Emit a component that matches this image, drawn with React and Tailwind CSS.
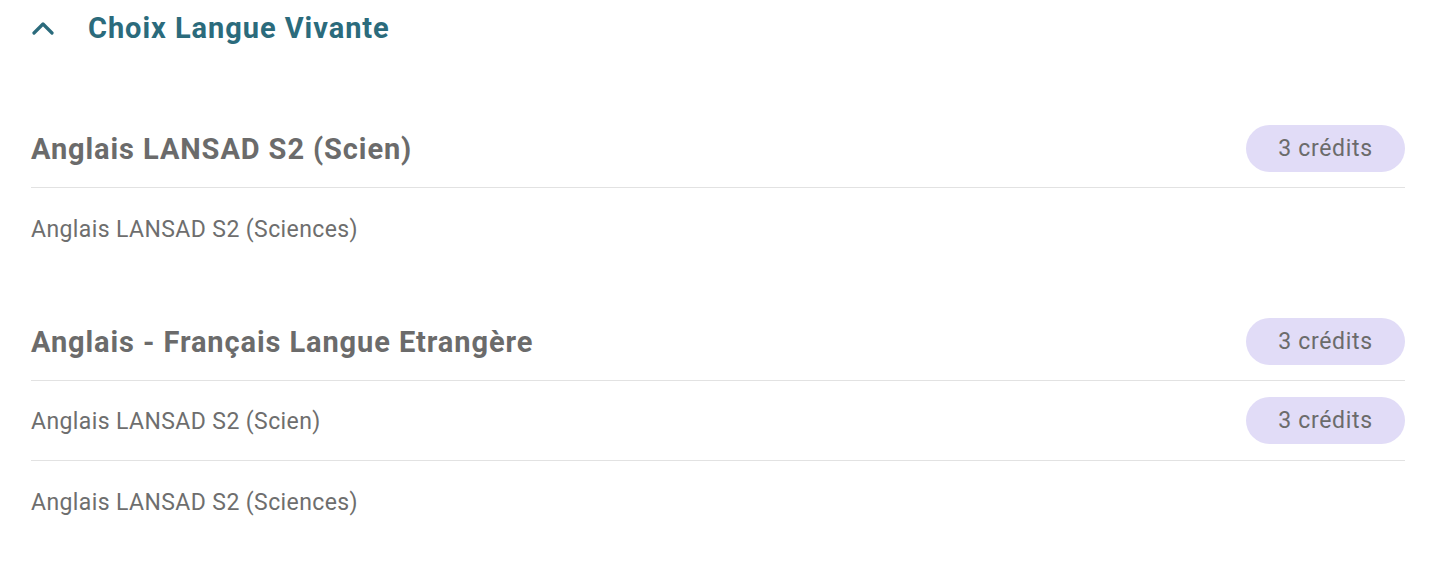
const sections = [
  {
    title: "Anglais LANSAD S2 (Scien)",
    credits: 3,
    rows: [{ label: "Anglais LANSAD S2 (Sciences)" }],
  },
  {
    title: "Anglais - Français Langue Etrangère",
    credits: 3,
    rows: [
      { label: "Anglais LANSAD S2 (Scien)", credits: 3 },
      { label: "Anglais LANSAD S2 (Sciences)" },
    ],
  },
];

function Credits({ value }) {
  return (
    <span className="inline-flex h-[47px] w-[159px] items-center justify-center rounded-full bg-[#e1dcf7] pt-[2px] text-[23px] tracking-[0.7px] text-[#6b6b6b]">
      {value} crédits
    </span>
  );
}

export default function App() {
  return (
    <div
      className="min-h-screen bg-white pl-[31px] pr-[39px] text-[#6e6e6e]"
      style={{ fontFamily: "Roboto, 'Liberation Sans', sans-serif" }}
    >
      <button className="flex h-[56px] items-center gap-[34px] pl-[1px] text-[#2b6b7c]">
        <svg width="22" height="14" viewBox="0 0 22 14" fill="none">
          <polyline
            points="2,12 11,3 20,12"
            stroke="currentColor"
            strokeWidth="3.2"
            strokeLinecap="round"
            strokeLinejoin="round"
          />
        </svg>
        <span className="pt-[2px] text-[29px] font-bold tracking-[0.95px]">Choix Langue Vivante</span>
      </button>

      <div className="mt-[69px] flex flex-col gap-[50px]">
        {sections.map((s, i) => (
          <section key={i}>
            <div className="flex items-center justify-between border-b border-[#e2e2e2] pb-[15px]">
              <h2 className="pt-[3px] text-[29px] font-bold tracking-[0.9px] text-[#6b6b6b]">{s.title}</h2>
              <Credits value={s.credits} />
            </div>
            {s.rows.map((r, j) => (
              <div
                key={j}
                className={
                  "flex h-[80px] items-center justify-between text-[23px] tracking-[0.4px] " +
                  (j < s.rows.length - 1 ? "border-b border-[#e2e2e2]" : "")
                }
              >
                <span className="pt-[4px]">{r.label}</span>
                {r.credits && <Credits value={r.credits} />}
              </div>
            ))}
          </section>
        ))}
      </div>
    </div>
  );
}
